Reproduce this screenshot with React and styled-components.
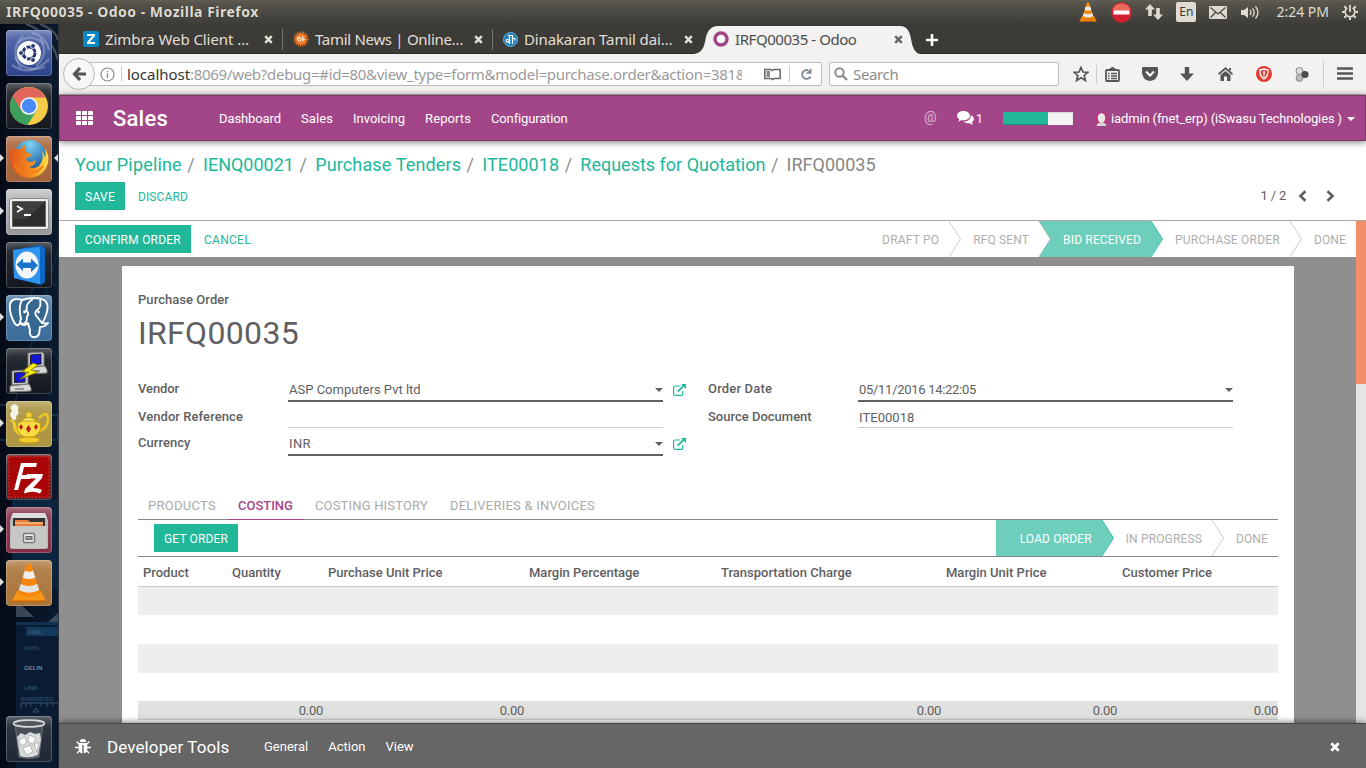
import React from 'react';
import styled, { createGlobalStyle, css } from 'styled-components';

const GlobalStyle = createGlobalStyle`
  * { box-sizing: border-box; }
  body { margin: 0; overflow: hidden; background: #fff; }
  svg { display: block; flex: none; }
`;

const system = '"Noto Sans", "Open Sans", sans-serif';
const roboto = 'Roboto, "Liberation Sans", sans-serif';
const teal = '#21b799';
const tealSoft = '#6dcfbb';
const purple = '#a24689';
const ink = '#606062';

const Text = styled.span`
  letter-spacing: ${(p) => p.$ls || 0}px;
  white-space: nowrap;
  flex: none;
`;

/* ---------- desktop shell ---------- */
const Desktop = styled.div`
  width: 1366px;
  height: 768px;
  display: flex;
  flex-direction: column;
  overflow: hidden;
  font-family: ${roboto};
`;
const TopPanel = styled.header`
  height: 24px;
  display: flex;
  align-items: center;
  padding: 0 8px 0 6px;
  background: linear-gradient(#615e53 0, #56544c 3px, #3d3c38 100%);
  color: #dfdbd2;
  font-family: ${system};
  flex: none;
`;
const WindowTitle = styled(Text)`
  font: bold 14px/24px ${system};
  flex: 1;
  text-shadow: 0 0 1px #222;
`;
const Tray = styled.div`
  display: flex;
  align-items: center;
  height: 24px;
`;
const TrayItem = styled.div`
  margin-left: ${(p) => p.$gap}px;
`;
const Lang = styled.div`
  width: 20px;
  height: 20px;
  border-radius: 2px;
  background: #dfdbd2;
  color: #3c3b37;
  font: 12px/20px ${system};
  text-align: center;
`;
const Clock = styled(Text)`
  font: 14px/24px ${system};
`;
const Below = styled.div`
  display: flex;
  flex: 1;
  min-height: 0;
`;

/* ---------- launcher ---------- */
const Launcher = styled.nav`
  width: 59px;
  flex: none;
  position: relative;
  background: #060d1a;
  border-right: 1px solid #2b3038;
  padding: 6px 0 6px 6px;
  display: flex;
  flex-direction: column;
`;
const Wallpaper = styled.svg`
  position: absolute;
  left: 0;
  top: 0;
`;
const Tile = styled.div`
  position: relative;
  width: 46px;
  height: 46px;
  margin-bottom: 7px;
  border-radius: 4px;
  background: ${(p) => p.$bg};
  box-shadow: inset 0 0 0 1px rgba(255, 255, 255, 0.2), inset 0 8px 10px -6px rgba(255, 255, 255, 0.35);
  flex: none;
  ${(p) => p.$last && css`margin: auto 0 0;`}
`;
const Pip = styled.span`
  position: absolute;
  top: 18px;
  border: 4.5px solid transparent;
  ${(p) => (p.$right
    ? css`right: -6px; border-right-color: #ddd; border-left: 0;`
    : css`left: -6px; border-left-color: #ddd; border-right: 0;`)}
`;

/* ---------- browser chrome ---------- */
const Browser = styled.div`
  flex: 1;
  min-width: 0;
  display: flex;
  flex-direction: column;
`;
const TabStrip = styled.div`
  height: 30px;
  flex: none;
  display: flex;
  background: #3c3b37;
  border-bottom: 1px solid #2c2b28;
  padding-left: 14px;
`;
const Tab = styled.div`
  position: relative;
  width: ${(p) => (p.$active ? 217 : 210)}px;
  height: 30px;
  display: flex;
  align-items: center;
  padding: 0 ${(p) => (p.$active ? 17 : 10)}px 0 10px;
  color: ${(p) => (p.$active ? '#4c4c4c' : '#e3dfd6')};
  font: 15px/32px ${system};
  ${(p) => p.$divider && css`
    background: linear-gradient(#77756f, #77756f) right 5px / 1px 21px no-repeat;
  `}
`;
const TabShape = styled.svg`
  position: absolute;
  left: -9px;
  top: 2px;
`;
const TabLabel = styled(Text)`
  position: relative;
  flex: 1;
  margin-left: 6px;
`;
const TabIcon = styled.div`
  position: relative;
`;
const NewTab = styled.div`
  display: flex;
  align-items: center;
  margin-left: 5px;
  padding-top: 2px;
`;
const Toolbar = styled.div`
  height: 41px;
  flex: none;
  display: flex;
  align-items: center;
  background: #f3f2f1;
  border-bottom: 1px solid #bbb8b2;
  padding-left: 4px;
  font: 15px/22px ${system};
`;
const Back = styled.div`
  width: 32px;
  height: 32px;
  border-radius: 50%;
  border: 1px solid #b9b6b0;
  background: #f8f7f6;
  display: grid;
  place-items: center;
  position: relative;
  z-index: 1;
`;
const Field = styled.div`
  height: 24px;
  display: flex;
  align-items: center;
  border: 1px solid #bebbb5;
  border-radius: 2px;
  background: #fff;
`;
const UrlField = styled(Field)`
  width: 734px;
  margin-left: -7px;
  padding-left: 11px;
`;
const UrlText = styled.div`
  width: 615px;
  overflow: hidden;
  white-space: nowrap;
  color: #9b9b9b;
  margin-left: 5px;
`;
const UrlHost = styled(Text)`
  color: #333;
`;
const SearchField = styled(Field)`
  width: 230px;
  margin-left: 7px;
  padding-left: 4px;
  color: #8c8c8c;
  gap: 5px;
`;
const Rule = styled.i`
  width: 1px;
  height: ${(p) => p.$h || 16}px;
  background: #ccc;
  margin-left: ${(p) => p.$gap || 0}px;
  flex: none;
`;
const MenuRule = styled(Rule)`
  background: linear-gradient(transparent, #ccc 25%, #ccc 75%, transparent);
`;
const Tool = styled.div`
  margin-left: ${(p) => p.$gap}px;
`;

/* ---------- application ---------- */
const NavBar = styled.nav`
  position: relative;
  z-index: 2;
  height: 46px;
  flex: none;
  display: flex;
  align-items: center;
  padding: 0 10px 0 16px;
  background: ${purple};
  border: 1px solid #7a3768;
  box-shadow: 0 1px 7px rgba(0, 0, 0, 0.55);
  color: #fff;
  font: 13px/44px ${roboto};
`;
const AppTitle = styled(Text)`
  font: 500 22px/44px ${roboto};
  width: 106px;
  margin: 2px 0 0 20px;
`;
const Menu = styled.div`
  display: flex;
  gap: 20px;
  flex: 1;
  padding-top: ${(p) => p.$drop || 0}px;
`;
const Mention = styled.span`
  font: 14px/40px ${roboto};
  opacity: 0.6;
  margin-top: -2px;
`;
const Chats = styled.div`
  display: flex;
  align-items: center;
  gap: 2px;
  margin-left: 20px;
`;
const ChatCount = styled.span`
  padding-top: 2px;
`;
const Meter = styled.div`
  width: 70px;
  height: 13px;
  margin-left: 20px;
  background: #f4f4f4;
  box-shadow: inset 0 1px 2px rgba(0, 0, 0, 0.15);
`;
const MeterFill = styled.div`
  width: 45px;
  height: 13px;
  background: ${teal};
  box-shadow: inset 0 -1px 0 #1a917a;
`;
const User = styled.div`
  display: flex;
  align-items: center;
  margin-left: 22px;
  padding-top: 2px;
`;
const UserName = styled(Text)`
  margin: 0 5px 0 3px;
`;
const Caret = styled.i`
  border: 4px solid transparent;
  border-top-color: ${(p) => p.$color || 'currentColor'};
  border-bottom: 0;
  flex: none;
`;
const ControlPanel = styled.section`
  height: 80px;
  flex: none;
  display: flex;
  flex-direction: column;
  padding: 12px 31px 0 16px;
  background: #fff;
  border-bottom: 1px solid #a8a8a8;
`;
const Crumbs = styled.div`
  display: flex;
  font: 18px/24px ${roboto};
  color: ${teal};
`;
const Slash = styled.span`
  width: 21.2px;
  padding-left: 5.5px;
  color: #8f8f8f;
`;
const Current = styled(Text)`
  color: #878787;
`;
const Actions = styled.div`
  display: flex;
  align-items: center;
  margin-top: 5px;
`;
const Button = styled.button`
  height: 28px;
  border: 0;
  padding: 2px 10px 0;
  margin-right: 3px;
  background: ${(p) => (p.$primary ? teal : 'transparent')};
  color: ${(p) => (p.$primary ? '#fff' : teal)};
  font: 12px/26px ${roboto};
`;
const Pager = styled.div`
  margin-left: auto;
  display: flex;
  align-items: center;
  color: ${ink};
  font: 13px/26px ${roboto};
`;
const Workspace = styled.div`
  flex: 1;
  min-height: 0;
  display: flex;
  overflow: hidden;
`;
const Page = styled.main`
  flex: 1;
  display: flex;
  flex-direction: column;
  background: #8f8f8f;
`;
const ScrollTrack = styled.div`
  width: 10px;
  background: #e5e5e5;
`;
const ScrollThumb = styled.div`
  height: 163px;
  background: #f08f68;
`;
const StatusBar = styled.div`
  height: ${(p) => (p.$inner ? 37 : 36)}px;
  flex: none;
  display: flex;
  align-items: center;
  padding-left: 16px;
  background: #fff;
  ${(p) => p.$inner && css`border-bottom: 1px solid #888;`}
`;
const Steps = styled.div`
  margin-left: auto;
  display: flex;
  height: 36px;
  color: #aeaeae;
  font: 12px/38px ${roboto};
`;
const Step = styled.div`
  height: 36px;
  padding: 0 10px 0 ${(p) => (p.$first ? 24 : 12)}px;
  background: ${(p) => (p.$active ? tealSoft : 'transparent')};
  color: ${(p) => (p.$active ? '#fff' : 'inherit')};
`;
const Sheet = styled.section`
  width: 1172px;
  flex: 1;
  margin: 9px 0 0 63px;
  padding: 25px 16px 0;
  background: #fff;
  color: ${ink};
  overflow: hidden;
`;
const Kind = styled.div`
  font: 500 13px/18px ${roboto};
  letter-spacing: 0.05px;
`;
const Heading = styled.h1`
  margin: 4px 0 0;
  font: 400 32px/40px ${roboto};
  height: 63px;
`;
const Groups = styled.div`
  display: flex;
  gap: 22px;
  height: 111px;
`;
const Group = styled.div`
  width: 548px;
  display: flex;
  flex-direction: column;
  gap: 2px;
`;
const FormRow = styled.div`
  display: flex;
  height: ${(p) => (p.$strong ? 26 : 24)}px;
`;
const Label = styled.label`
  width: 150px;
  font: 500 13px/26px ${roboto};
`;
const Value = styled.div`
  width: 375px;
  display: flex;
  align-items: center;
  justify-content: space-between;
  padding: ${(p) => (p.$strong ? '3px' : '4px')} 0 0 1px;
  border-bottom: ${(p) => (p.$strong ? `2px solid ${ink}` : '1px solid #ccc')};
  font: 13px/19px ${roboto};
`;
const LinkIcon = styled.div`
  margin: 8px 0 0 10px;
`;
const Tabs = styled.div`
  display: flex;
  gap: 2px;
  height: 33px;
  border-bottom: 1px solid #888;
`;
const NoteTab = styled.div`
  height: 33px;
  padding: 0 10px;
  font: ${(p) => (p.$active ? 500 : 400)} 13px/37px ${roboto};
  color: ${(p) => (p.$active ? purple : '#aaa')};
  border-bottom: 1px solid ${(p) => (p.$active ? purple : 'transparent')};
`;
const gridCols = css`
  display: grid;
  grid-template-columns: 89px 96px 201px 192px 225px 176px 161px;
`;
const HeadRow = styled.div`
  ${gridCols}
  height: 30px;
  border-bottom: 1px solid #ccc;
  font: 500 13px/31px ${roboto};
`;
const HeadCell = styled.div`
  padding-left: 5px;
`;
const BlankRow = styled.div`
  height: ${(p) => p.$h}px;
  background: ${(p) => (p.$shade ? '#edefee' : '#fff')};
`;
const TotalRow = styled.div`
  ${gridCols}
  height: 19px;
  background: #e1e1df;
  border-bottom: 1px solid #d0d0ce;
  font: 13px/19px ${roboto};
  text-align: right;
`;
const DevBar = styled.footer`
  position: relative;
  z-index: 2;
  height: 45px;
  flex: none;
  display: flex;
  align-items: center;
  padding: 1px 26px 0 16px;
  background: #666;
  border-top: 1px solid #484848;
  box-shadow: 0 -1px 6px rgba(0, 0, 0, 0.5);
  color: #fff;
  font: 13px/43px ${roboto};
`;
const DevTitle = styled(Text)`
  width: 157px;
  margin: 0 0 0 16px;
  font: 17px/42px ${roboto};
`;

/* ---------- drawings ---------- */
const Cross = ({ size = 9, color = '#e3dfd6' }) => (
  <svg width={size} height={size} viewBox="0 0 9 9">
    <path d="M1.2 1.2l6.6 6.6M7.8 1.2L1.2 7.8" stroke={color} strokeWidth="2.5" />
  </svg>
);

const Arrow = ({ kind }) => (
  <svg width="12" height="36" viewBox="0 0 12 36">
    {kind === 'in' && <path d="M0 0H12V36H0L11.5 18Z" fill={tealSoft} />}
    {kind === 'out' && <path d="M0 0L11.5 18L0 36Z" fill={tealSoft} />}
    <path d="M0 0L11.5 18L0 36" fill="none" strokeWidth="1" stroke={kind === 'out' ? '#3dbfa5' : kind === 'in' ? '#8fbdb3' : '#ccc'} />
  </svg>
);

const Chevron = ({ right }) => (
  <svg width="9" height="12" viewBox="0 0 9 12">
    <path d={right ? 'M1.5 1.2L6.6 6L1.5 10.8' : 'M7.5 1.2L2.4 6L7.5 10.8'} fill="none" stroke={ink} strokeWidth="2.6" />
  </svg>
);

const External = () => (
  <svg width="13" height="12" viewBox="0 0 13 12" fill="none" stroke={teal}>
    <path d="M7.5 2H2.2Q.6 2 .6 3.6V9.9Q.6 11.4 2.2 11.4H8.2Q9.8 11.4 9.8 9.9V7" strokeWidth="1.2" />
    <path d="M4.7 7.6L11 1.6" strokeWidth="1.8" />
    <path d="M8 0H13V5Z" fill={teal} stroke="none" />
  </svg>
);

const Cone = ({ size }) => (
  <svg width={size} height={size} viewBox="0 0 36 40">
    <path d="M6 28H30L35 38Q35 39 34 39H2Q1 39 1 38Z" fill="#f48809" />
    <path d="M1 37.5H35V39H1Z" fill="#ca6503" />
    <path d="M15.5 2Q18 0 20.5 2L29 30Q18 37 7 30Z" fill="#f68a0b" />
    <path d="M13.7 8.5Q18 11 22.3 8.5L24.5 15.5Q18 19 11.5 15.5Z" fill="#eee" />
    <path d="M9.6 22Q18 26.5 26.4 22L28.5 28Q18 34 7.5 28Z" fill="#e8e8e8" />
    <path d="M9 32.5Q18 37 28 32.5" stroke="#d66d00" strokeWidth="1.4" fill="none" />
  </svg>
);

const UbuntuArt = () => (
  <svg width="46" height="46" viewBox="0 0 46 46">
    <g fill="none" stroke="#b9c4df" strokeOpacity=".4" strokeWidth="2.2">
      <path d="M17 6Q3 20 15 38" /><path d="M12 13Q24 2 38 14" /><path d="M34 8Q44 24 30 36" />
      <path d="M9 27Q18 44 39 37" /><path d="M6 35Q25 48 43 29" /><path d="M26 3Q40 6 43 20" />
    </g>
    <circle cx="23" cy="23" r="12" fill="#fff" />
    <circle cx="23" cy="23" r="6" fill="none" stroke="#26346f" strokeWidth="3" strokeDasharray="11.2 1.37" />
    <g fill="#26346f" stroke="#fff" strokeWidth=".9"><circle cx="15" cy="23" r="2.4" /><circle cx="27" cy="16" r="2.4" /><circle cx="27" cy="30" r="2.4" /></g>
  </svg>
);

const ChromeArt = () => (
  <svg width="46" height="46" viewBox="0 0 46 46">
    <circle cx="23" cy="23" r="19" fill="#f6cb45" />
    <path d="M23 23L6.5 13.5A19 19 0 0 0 21.500 42L31 27Z" fill="#3d9f5c" />
    <path d="M6.500 13.500A19 19 0 0 1 39.800 14.500H23L15 27Z" fill="#e2665c" />
    <circle cx="23" cy="23" r="8.800" fill="#f5f5f5" />
    <circle cx="23" cy="23" r="7.200" fill="#4a8af4" />
  </svg>
);

const FirefoxArt = () => (
  <svg width="46" height="46" viewBox="0 0 46 46">
    <defs>
      <radialGradient id="globe" cx=".5" cy=".15" r=".8"><stop offset="0" stopColor="#7fd4f3" /><stop offset="1" stopColor="#12559b" /></radialGradient>
      <linearGradient id="fox" x1="0" x2="1"><stop offset="0" stopColor="#e2541b" /><stop offset=".6" stopColor="#f5901e" /><stop offset="1" stopColor="#ffe24a" /></linearGradient>
    </defs>
    <circle cx="24" cy="20" r="16" fill="url(#globe)" />
    <path d="M5 11Q7 12 9 14Q12 12 15 13Q17 9 20 9Q18 13 20 16Q23 18 26 18Q25 21 20 22Q20 25 24 26Q28 26 30 24Q29 30 23 31Q31 34 35 27Q38 21 36 15Q39 18 39 22Q41 16 38 11Q44 19 42 27Q38 41 23 42Q9 41 5 28Q3 21 5 11Z" fill="url(#fox)" />
    <path d="M8 28Q13 38 24 37Q33 36 37 30" stroke="#ef7d1a" strokeWidth="2" fill="none" />
  </svg>
);

const TerminalArt = () => (
  <svg width="46" height="46" viewBox="0 0 46 46">
    <rect x="3.500" y="9.500" width="39" height="31" rx="2" fill="#eee" stroke="#888" />
    <rect x="6.500" y="12.500" width="33" height="25" fill="#2b2d2b" stroke="#666" />
    <path d="M6.500 12.500H39.500L20 30H6.500Z" fill="#484b48" opacity=".6" />
    <path d="M11 17L16 20L11 23M18 26H25" stroke="#fff" strokeWidth="1.800" fill="none" />
  </svg>
);

const TeamViewerArt = () => (
  <svg width="46" height="46" viewBox="0 0 46 46">
    <path d="M7 8L35 3L39 6V40L35 43L8 36Z" fill="#0d67c8" />
    <path d="M7 8L34 5V42L8 36Z" fill="#2f95ef" />
    <ellipse cx="21" cy="23" rx="11.500" ry="13.500" fill="#f4f6f8" />
    <path d="M10.500 22.500L17 16.500V20.500H25V16.500L32 23.500L25 30V26H17V29Z" fill="#1c74cf" />
  </svg>
);

const PostgresArt = () => (
  <svg width="46" height="46" viewBox="0 0 46 46" fill="#35678f" stroke="#fff" strokeWidth="1.900" strokeLinejoin="round">
    <path d="M16 5Q29 1 38 5Q44 9 40 20Q38 26 36 28Q41 29 42 28Q39 32 34 32L33 39Q31 43 27 42Q23 41 24 35L22 28Q18 32 14 28Q11 33 8 27Q3 18 4 9Q6 2 16 5Z" />
    <path d="M16 5Q12 12 15 24Q13 27 16 29Q21 29 21 22Q24 17 19 15M31 15Q27 18 32 23L36 28M31 15Q36 12 34 5M21 15Q19 9 27 4" fill="none" />
    <g fill="#fff" stroke="none"><circle cx="18.500" cy="17" r="1.400" /><circle cx="32.500" cy="17" r="1.400" /></g>
  </svg>
);

const PuttyArt = () => (
  <svg width="46" height="46" viewBox="0 0 46 46">
    {[[22, 4], [6, 22]].map(([x, y]) => (
      <g key={x} transform={`translate(${x} ${y})`}>
        <path d="M0 1L14 0L16 2V14L0 15Z" fill="#c8c8c4" stroke="#777" />
        <path d="M2.500 3L13 2V12L2.500 12.500Z" fill="#1515d6" stroke="#223" />
        <path d="M-2 16L17 14L19 18V21L-2 22Z" fill="#d8d8d4" stroke="#777" />
        <path d="M3 19H12" stroke="#555" />
      </g>
    ))}
    <path d="M27 15L16 24H23L14 31L32 24L25 22L32 17Z" fill="#f8ee13" stroke="#7e7400" strokeWidth=".8" />
  </svg>
);

const TeapotArt = () => (
  <svg width="46" height="46" viewBox="0 0 46 46">
    <path d="M7 19Q2 13 6 10Q2 5 8 3Q14 4 12 9Q14 13 10 15Q12 19 7 19Z" fill="#f5f3e9" />
    <path d="M33 17Q42 8 42 19Q41 29 32 30" fill="none" stroke="#e9c928" strokeWidth="2.500" />
    <path d="M4 19Q8 18 10 23Q10 27 15 32L17 35Q7 33 7 25Q7 21 4 20Z" fill="#efcc28" />
    <path d="M12 22Q22 16 34 22Q37 30 28 36H18Q9 30 12 22Z" fill="#f7dc43" stroke="#c69b12" />
    <path d="M15 20Q22 13 31 20Z" fill="#fbec7b" stroke="#c69b12" /><circle cx="23" cy="14" r="3.200" fill="#f4d33a" stroke="#c69b12" />
    <ellipse cx="23" cy="39" rx="11" ry="3" fill="#f1ce2d" stroke="#c69b12" />
    <path d="M15 23L17 26L15 29L13 26ZM22.500 24L25 28L22.500 32L20 28ZM30 23L32 26L30 29L28 26Z" fill="#c01c1c" />
  </svg>
);

const FileZillaArt = () => (
  <svg width="46" height="46" viewBox="0 0 46 46">
    <rect x="2.500" y="2.500" width="41" height="41" fill="#a90707" stroke="#c92323" strokeWidth="2" strokeDasharray="2 1.500" />
    <path d="M15 9H31L30 13H18L16 21H25L24 25H15L12 36H8Z" fill="#fff" />
    <path d="M21 20H37L36 24L27 34Q33 34 36 36L34 39.500Q27 36 18 39.500L19 35L30 24.500H20Z" fill="#fff" />
  </svg>
);

const FilesArt = () => (
  <svg width="46" height="46" viewBox="0 0 46 46">
    <path d="M7 6H39L42 13V40Q42 42 40 42H6Q4 42 4 40V13Z" fill="#b9b9b7" />
    <path d="M7 6H39L41 11H5Z" fill="#ddd" />
    <rect x="7" y="11" width="32" height="9" fill="#333" />
    <path d="M9 13H22L24 15H37V20H9Z" fill="#eb7b31" /><path d="M9 16H37" stroke="#f7dcc2" />
    <path d="M5 19H41V41H5Z" fill="#c7c7c5" />
    <rect x="17.500" y="26.500" width="11" height="9" rx="1" fill="#eee" stroke="#777" strokeWidth="1.500" />
    <rect x="20" y="29.500" width="6" height="3" fill="#999" stroke="#666" />
  </svg>
);

const VlcArt = () => (
  <svg width="46" height="46" viewBox="-5 -3 46 46">
    <path d="M6 28H30L35 38Q35 39 34 39H2Q1 39 1 38Z" fill="#f79517" />
    <path d="M1 37.500H35V39H1Z" fill="#ca6503" />
    <path d="M15.500 2Q18 0 20.500 2L29 30Q18 37 7 30Z" fill="#f7860a" />
    <path d="M13.900 7.500Q18 10 22.100 7.500L24.300 14.500Q18 17.500 11.700 14.500Z" fill="#eee" />
    <path d="M9.800 21Q18 25 26.200 21L28.200 27Q18 32.500 7.800 27Z" fill="#e4e4e4" />
  </svg>
);

const TrashArt = () => (
  <svg width="46" height="46" viewBox="0 0 46 46">
    <path d="M9 8H37L33 41Q23 44 13 41Z" fill="#5b6268" fillOpacity=".6" stroke="#7d8489" strokeWidth=".7" />
    <path d="M11 21L15 17L19 19L24 16L29 18L34 17L35 24L32 39Q23 43 14 40Z" fill="#d9dada" />
    <path d="M13 24L19 21L21 27L15 30ZM23 19L30 22L27 28L22 26ZM17 32L24 29L27 36L20 39ZM28 29L33 26L31 36Z" fill="#fafafa" stroke="#a2a4a5" strokeWidth=".7" />
    <ellipse cx="23" cy="7.500" rx="15.500" ry="3.400" fill="#50565b" stroke="#d5d8da" strokeWidth="1.600" />
  </svg>
);

const LauncherScene = () => (
  <Wallpaper width="58" height="744" viewBox="0 24 58 744">
    <defs><linearGradient id="sky" x1="0" x2="1"><stop offset="0" stopColor="#050a17" /><stop offset="1" stopColor="#0a1a2e" /></linearGradient></defs>
    <rect y="24" width="58" height="744" fill="url(#sky)" />
    <path d="M26 24Q50 32 58 60M40 24Q56 30 58 40" stroke="#4a4f5c" strokeWidth="2" fill="none" />
    <path d="M30 240L58 290M44 240L30 300L58 360M58 250L10 420" stroke="#14304a" fill="none" />
    <path d="M52 415H58V440H52M0 405H6M0 440H12" stroke="#1d4d6c" fill="none" />
    <rect x="12" y="500" width="46" height="88" fill="#0b2440" />
    <path d="M16 600V617H34ZM48 622L58 613V622Z" fill="#8296a8" opacity=".4" />
    <rect x="16" y="622" width="42" height="146" fill="#0a1c32" />
    <rect x="16" y="622" width="42" height="3" fill="#10304f" />
    <rect x="26" y="627" width="32" height="9" fill="#12395b" />
    <g fill="#416482" fontFamily="Liberation Sans" fontWeight="bold" fontSize="6">
      <text x="29" y="634">LOC</text><text x="24" y="650" opacity=".5">EMIS</text><text x="24" y="670" fill="#7088a0">GELIN</text><text x="24" y="690" opacity=".7">LINK</text><text x="21" y="701" opacity=".6" fontSize="5">BAROMETER</text>
    </g>
    <path d="M21 708V703H58M26 703V707M31 703V706M41 703V706M47 703V707M53 703V706M33 712L36 708L39 712Z" stroke="#34536e" fill="none" />
  </Wallpaper>
);

const launcherItems = [
  { bg: 'linear-gradient(#5a6fae,#2d448c)', Art: UbuntuArt },
  { bg: 'linear-gradient(#33363c,#15181f)', Art: ChromeArt },
  { bg: 'linear-gradient(#b3754c,#a2623a)', Art: FirefoxArt, left: true, right: true },
  { bg: 'linear-gradient(#c3c3c6,#98989b)', Art: TerminalArt, left: true },
  { bg: 'linear-gradient(#2c3138,#14181e)', Art: TeamViewerArt },
  { bg: 'linear-gradient(#527ea8,#3b6c9a)', Art: PostgresArt, left: true },
  { bg: 'linear-gradient(#2c3037,#12161d)', Art: PuttyArt },
  { bg: 'linear-gradient(#b39e54,#ad9440)', Art: TeapotArt, left: true },
  { bg: 'linear-gradient(#4d3337,#20252c)', Art: FileZillaArt },
  { bg: 'linear-gradient(#92455a,#862e42)', Art: FilesArt, left: true },
  { bg: 'linear-gradient(#b48551,#a87337)', Art: VlcArt, left: true },
];

const NoEntry = () => (
  <svg width="21" height="21" viewBox="0 0 21 21"><circle cx="10.500" cy="10.500" r="10.300" fill="#d02030" /><path d="M1.500 8A9.500 9.500 0 0 1 19.500 8Q10 11 1.500 8Z" fill="#ea6a5e" /><rect x="2.500" y="8.500" width="16" height="4" fill="#fff" /></svg>
);
const Transfer = () => (
  <svg width="18" height="16" viewBox="0 0 18 16" fill="#dfdbd2"><path d="M5 0L10 5.500H6.800V12H3.200V5.500H0Z" /><path d="M13 16L8 10.500H11.200V4H14.800V10.500H18Z" /></svg>
);
const Mail = () => (
  <svg width="18" height="13" viewBox="0 0 18 13"><rect width="18" height="13" rx="1" fill="#dfdbd2" /><path d="M1.500 1.500L9 8L16.500 1.500M1.500 11.500L6.500 6.500M16.500 11.500L11.500 6.500" fill="none" stroke="#46443f" strokeWidth="1.200" /></svg>
);
const Sound = () => (
  <svg width="20" height="15" viewBox="0 0 20 15" fill="none" stroke="#dfdbd2" strokeWidth="1.300"><path d="M0 5H3L7 2V13L3 10H0Z" fill="#dfdbd2" stroke="none" /><path d="M9 5Q11 7.500 9 10M11.500 3.300Q15 7.500 11.500 11.700M14.500 1.500Q19.500 7.500 14.500 13.500" /></svg>
);
const Power = () => (
  <svg width="16" height="16" viewBox="0 0 16 16" fill="none" stroke="#dfdbd2"><path d="M5.300 3.800A4.900 4.900 0 1 0 10.700 3.800" strokeWidth="1.700" /><path d="M8 1V8" strokeWidth="1.800" /><path d="M2.300 2.300L4 4M13.700 2.300L12 4M0 8H2.500M13.500 8H16M2.300 13.700L4 12M13.700 13.700L12 12M8 13.500V16" strokeWidth="2" /></svg>
);
const ZimbraIcon = () => (
  <svg width="16" height="16" viewBox="0 0 16 16"><rect width="16" height="16" rx="2" fill="#0a87c7" /><path d="M4 3H12V5L6.800 11H12V13H4V11L9.200 5H4Z" fill="#fff" /></svg>
);
const TamilIcon = () => (
  <svg width="16" height="16" viewBox="0 0 16 16" fill="none"><circle cx="8" cy="8" r="6.800" stroke="#dd6a20" strokeWidth="1.800" strokeDasharray="1.200 .9" /><circle cx="8" cy="8" r="6" fill="#f27b28" /><path d="M7 6Q4.500 5.500 4.500 8Q5 10.500 7.500 9.500Q9.500 8 7.500 7L5.500 8M9.800 5V10.500M9.800 8.500H12" stroke="#fff" /></svg>
);
const DinakaranIcon = () => (
  <svg width="15" height="15" viewBox="0 0 15 15" fill="none"><circle cx="7.500" cy="7.500" r="7" fill="#2180bd" stroke="#66acd6" /><path d="M5 3.500H10M6.500 3.500V8Q3 6.500 3.300 9.300Q4.500 11 6.500 9V12M9.500 3.500V12M9.500 6.500Q12.500 5.500 11.800 8.500" stroke="#fff" strokeWidth="1.200" /></svg>
);
const OdooIcon = () => (
  <svg width="16" height="16" viewBox="0 0 16 16"><circle cx="8" cy="8" r="6" fill="#fff" stroke="#a24689" strokeWidth="3.400" /></svg>
);

const browserTabs = [
  { label: 'Zimbra Web Client …', ls: -0.07, Icon: ZimbraIcon, divider: true },
  { label: 'Tamil News | Online…', ls: -0.3, Icon: TamilIcon, divider: true },
  { label: 'Dinakaran Tamil dai…', ls: -0.13, Icon: DinakaranIcon },
];

const gray = '#565656';

function BrowserChrome() {
  return (
    <>
      <TabStrip>
        {browserTabs.map(({ label, ls, Icon, divider }) => (
          <Tab key={label} $divider={divider}>
            <TabIcon><Icon /></TabIcon>
            <TabLabel $ls={ls}>{label}</TabLabel>
            <Cross />
          </Tab>
        ))}
        <Tab $active>
          <TabShape width="226" height="28" viewBox="0 0 226 28">
            <path d="M0 28Q9 27 11 16Q13 0 24 0H206Q215 0 217 13Q219 27 226 28Z" fill="#f3f2f1" />
          </TabShape>
          <TabIcon><OdooIcon /></TabIcon>
          <TabLabel $ls={-0.44}>IRFQ00035 - Odoo</TabLabel>
          <TabIcon><Cross color="#666" /></TabIcon>
        </Tab>
        <NewTab>
          <svg width="14" height="14" viewBox="0 0 14 14"><path d="M7 1V13M1 7H13" stroke="#fff" strokeWidth="2.600" /></svg>
        </NewTab>
      </TabStrip>
      <Toolbar>
        <Back>
          <svg width="15" height="16" viewBox="0 0 15 16"><path d="M8 2L2.500 8L8 14M2.500 8H14" fill="none" stroke={gray} strokeWidth="3.200" /></svg>
        </Back>
        <UrlField>
          <svg width="15" height="15" viewBox="0 0 15 15" fill="none" stroke="#8c8c8c"><circle cx="7.500" cy="7.500" r="6.500" strokeWidth="1.200" /><path d="M7.500 6.500V11M7.500 3.800V5.200" strokeWidth="1.400" /></svg>
          <Rule $gap={6} />
          <UrlText>
            <UrlHost $ls={-0.04}>localhost</UrlHost>
            <Text $ls={-0.29}>:8069/web?debug=#id=80&amp;view_type=form&amp;model=purchase.order&amp;action=381&amp;</Text>
          </UrlText>
          <Tool $gap={22}>
            <svg width="17" height="13" viewBox="0 0 17 13" fill="none" stroke="#666" strokeWidth="1.500"><path d="M8.500 2.500L10 1.500H16.200V10.500H10L8.500 11.500L7 10.500H.8V1.500H7ZM2.500 4H6M2.500 6H6M2.500 8H6" /></svg>
          </Tool>
          <Rule $gap={8} />
          <Tool $gap={10}>
            <svg width="12" height="13" viewBox="0 0 12 13"><path d="M8.500 2.500A4.400 4.400 0 1 0 10.500 8.500" fill="none" stroke="#7f8b99" strokeWidth="1.900" /><path d="M11.500 0V5.800H5.800Z" fill="#7f8b99" /></svg>
          </Tool>
        </UrlField>
        <SearchField>
          <svg width="14" height="14" viewBox="0 0 14 14" fill="none" stroke="#8c8c8c"><circle cx="5.500" cy="5.500" r="4.200" strokeWidth="2" /><path d="M8.500 8.500L13 13" strokeWidth="2.400" /></svg>
          <Text $ls={-0.35}>Search</Text>
        </SearchField>
        <Tool $gap={14}>
          <svg width="16" height="16" viewBox="0 0 16 16"><path d="M8 1.500L10 6L15 6.300L11.200 9.500L12.400 14.500L8 11.800L3.600 14.500L4.800 9.500L1 6.300L6 6Z" fill="none" stroke={gray} strokeWidth="1.700" /></svg>
        </Tool>
        <Rule $gap={7} $h={18} />
        <Tool $gap={8}>
          <svg width="15" height="15" viewBox="0 0 15 15" fill="none" stroke={gray}><rect x="1" y="3" width="13" height="11" rx="1" strokeWidth="1.800" /><path d="M5 2.500L7.500 .8L10 2.500" strokeWidth="2" /><path d="M3 6.500H4.500M6 6.500H12M3 9H4.500M6 9H12M3 11.500H4.500M6 11.500H12" strokeWidth="1.400" /></svg>
        </Tool>
        <Tool $gap={22}>
          <svg width="16" height="14" viewBox="0 0 16 14"><path d="M1 0H15Q16 0 16 1V6Q15 13.500 8 14Q1 13.500 0 6V1Q0 0 1 0Z" fill={gray} /><path d="M4 4.500L8 8.500L12 4.500" fill="none" stroke="#fff" strokeWidth="2" /></svg>
        </Tool>
        <Tool $gap={22}>
          <svg width="14" height="14" viewBox="0 0 14 14"><path d="M4.800 0H9.200V6.500H14L7 14L0 6.500H4.800Z" fill={gray} /></svg>
        </Tool>
        <Tool $gap={24}>
          <svg width="15" height="14" viewBox="0 0 15 14" fill={gray}><path d="M7.500 0L15 6.500L14 8L7.500 2.600L1 8L0 6.500ZM2.500 8L7.500 4L12.500 8V14H9V9.500H6V14H2.500ZM11 1H13V4L11 2.500Z" /></svg>
        </Tool>
        <Tool $gap={23}>
          <svg width="16" height="16" viewBox="0 0 16 16"><circle cx="8" cy="8" r="8" fill="#e23b32" /><path d="M4 4L8 3L12 4Q12.500 10 8 13Q3.500 10 4 4Z" fill="none" stroke="#fff" strokeWidth="1.300" /><path d="M8 5V9M8 9.800V11" stroke="#fff" strokeWidth="1.600" /></svg>
        </Tool>
        <Tool $gap={23}>
          <svg width="14" height="15" viewBox="0 0 14 15"><circle cx="4.500" cy="4" r="3.500" fill="#ddd" stroke="#888" /><circle cx="4.500" cy="11" r="3.500" fill="#bbb" stroke="#888" /><circle cx="10" cy="7.500" r="3.600" fill="#4c4c4c" /></svg>
        </Tool>
        <MenuRule $gap={14} $h={36} />
        <Tool $gap={13}>
          <svg width="16" height="14" viewBox="0 0 16 14"><path d="M1 1.500H15M1 6.500H15M1 11.500H15" stroke={gray} strokeWidth="2.700" strokeLinecap="round" /></svg>
        </Tool>
      </Toolbar>
    </>
  );
}

const menus = [['Dashboard', -0.1], ['Sales', 0.09], ['Invoicing', 0.01], ['Reports', 0.1], ['Configuration', -0.15]];
const crumbs = [['Your Pipeline', 0.17], ['IENQ00021', 0], ['Purchase Tenders', 0.14], ['ITE00018', 0.08], ['Requests for Quotation', 0]];
const columns = ['Product', 'Quantity', 'Purchase Unit Price', 'Margin Percentage', 'Transportation Charge', 'Margin Unit Price', 'Customer Price'];
const totals = ['', '0.00', '0.00', '', '0.00', '0.00', '0.00'];

function FieldRow({ label, lls, value, ls, select, link }) {
  return (
    <FormRow $strong={select}>
      <Label><Text $ls={lls}>{label}</Text></Label>
      <Value $strong={select}>
        <Text $ls={ls}>{value}</Text>
        {select && <Caret />}
      </Value>
      {link && <LinkIcon><External /></LinkIcon>}
    </FormRow>
  );
}

export default function App() {
  return (
    <Desktop>
      <GlobalStyle />
      <TopPanel>
        <WindowTitle $ls={0.5}>IRFQ00035 - Odoo - Mozilla Firefox</WindowTitle>
        <Tray>
          <TrayItem><Cone size={20} /></TrayItem>
          <TrayItem $gap={13}><NoEntry /></TrayItem>
          <TrayItem $gap={13}><Transfer /></TrayItem>
          <TrayItem $gap={13}><Lang>En</Lang></TrayItem>
          <TrayItem $gap={13}><Mail /></TrayItem>
          <TrayItem $gap={14}><Sound /></TrayItem>
          <TrayItem $gap={15}><Clock>2:24 PM</Clock></TrayItem>
          <TrayItem $gap={13}><Power /></TrayItem>
        </Tray>
      </TopPanel>
      <Below>
        <Launcher>
          <LauncherScene />
          {launcherItems.map(({ bg, Art, left, right }, i) => (
            <Tile key={i} $bg={bg}>
              <Art />
              {left && <Pip />}
              {right && <Pip $right />}
            </Tile>
          ))}
          <Tile $last $bg="linear-gradient(#343a44,#1e2733)"><TrashArt /></Tile>
        </Launcher>
        <Browser>
          <BrowserChrome />
          <NavBar>
            <svg width="17" height="14" viewBox="0 0 17 14" fill="#fff">
              {[0, 5, 10].map((y) => [0, 6, 12].map((x) => <rect key={`${x}${y}`} x={x} y={y} width="5" height="4" rx=".6" />))}
            </svg>
            <AppTitle $ls={0.22}>Sales</AppTitle>
            <Menu $drop={2}>{menus.map(([m, ls]) => <Text key={m} $ls={ls}>{m}</Text>)}</Menu>
            <Mention>@</Mention>
            <Chats>
              <svg width="17" height="14" viewBox="0 0 17 14" fill="#fff">
                <path d="M6.500 0C10 0 12.800 2 12.800 4.700S10 9.300 6.500 9.300C5.800 9.300 5.200 9.200 4.600 9.100Q3 10.500 1.200 10.700Q2.200 9.500 2.300 8.200Q0 7 0 4.700C0 2 3 0 6.500 0Z" />
                <path d="M14 4Q17 5.500 17 8Q17 10 14.900 11.200Q15.200 12.500 16.300 13.500Q14.300 13.500 12.700 12.200Q9 12.800 6.500 10.600Q13.500 10.500 14 4Z" />
              </svg>
              <ChatCount>1</ChatCount>
            </Chats>
            <Meter><MeterFill /></Meter>
            <User>
              <svg width="13" height="15" viewBox="0 0 13 15"><circle cx="6.500" cy="6.500" r="6.500" fill="#c22d7d" /><ellipse cx="6.500" cy="6" rx="3.800" ry="4.800" fill="#e5e8e5" /><path d="M1.500 14Q2 11 5 10.500H8Q11 11 11.500 14Z" fill="#d5dad7" /></svg>
              <UserName $ls={-0.125}>iadmin (fnet_erp) (iSwasu Technologies )</UserName>
              <Caret />
            </User>
          </NavBar>
          <ControlPanel>
            <Crumbs>
              {crumbs.map(([c, ls]) => (
                <React.Fragment key={c}><Text $ls={ls}>{c}</Text><Slash>/</Slash></React.Fragment>
              ))}
              <Current>IRFQ00035</Current>
            </Crumbs>
            <Actions>
              <Button $primary><Text $ls={0.27}>SAVE</Text></Button>
              <Button><Text $ls={0.12}>DISCARD</Text></Button>
              <Pager>
                <Text $ls={-0.2}>1 / 2</Text>
                <Tool $gap={12}><Chevron /></Tool>
                <Tool $gap={19}><Chevron right /></Tool>
              </Pager>
            </Actions>
          </ControlPanel>
          <Workspace>
            <Page>
              <StatusBar>
                <Button $primary><Text $ls={0.22}>CONFIRM ORDER</Text></Button>
                <Button><Text $ls={0.28}>CANCEL</Text></Button>
                <Steps>
                  <Step><Text $ls={0.18}>DRAFT PO</Text></Step><Arrow />
                  <Step><Text $ls={0.15}>RFQ SENT</Text></Step><Arrow kind="in" />
                  <Step $active><Text $ls={0.16}>BID RECEIVED</Text></Step><Arrow kind="out" />
                  <Step><Text $ls={0.23}>PURCHASE ORDER</Text></Step><Arrow />
                  <Step><Text $ls={0.12}>DONE</Text></Step>
                </Steps>
              </StatusBar>
              <Sheet>
                <Kind>Purchase Order</Kind>
                <Heading><Text $ls={0.33}>IRFQ00035</Text></Heading>
                <Groups>
                  <Group>
                    <FieldRow label="Vendor" value="ASP Computers Pvt ltd" lls={-0.1} select link />
                    <FieldRow label="Vendor Reference" lls={0.07} value="" />
                    <FieldRow label="Currency" lls={0.05} value="INR" ls={0.4} select link />
                  </Group>
                  <Group>
                    <FieldRow label="Order Date" lls={0.17} value="05/11/2016 14:22:05" ls={-0.29} select />
                    <FieldRow label="Source Document" value="ITE00018" ls={0.05} />
                  </Group>
                </Groups>
                <Tabs>
                  <NoteTab><Text $ls={0.27}>PRODUCTS</Text></NoteTab>
                  <NoteTab $active>COSTING</NoteTab>
                  <NoteTab><Text $ls={0.18}>COSTING HISTORY</Text></NoteTab>
                  <NoteTab><Text $ls={0.22}>DELIVERIES &amp; INVOICES</Text></NoteTab>
                </Tabs>
                <StatusBar $inner>
                  <Button $primary><Text $ls={0.14}>GET ORDER</Text></Button>
                  <Steps>
                    <Step $active $first><Text $ls={0.14}>LOAD ORDER</Text></Step><Arrow kind="out" />
                    <Step><Text $ls={0.15}>IN PROGRESS</Text></Step><Arrow />
                    <Step><Text $ls={0.12}>DONE</Text></Step>
                  </Steps>
                </StatusBar>
                <HeadRow>{columns.map((c) => <HeadCell key={c}>{c}</HeadCell>)}</HeadRow>
                <BlankRow $h={28} $shade />
                <BlankRow $h={29} />
                <BlankRow $h={29} $shade />
                <BlankRow $h={28} />
                <TotalRow>{totals.map((t, i) => <Text key={i} $ls={-0.3}>{t}</Text>)}</TotalRow>
              </Sheet>
            </Page>
            <ScrollTrack><ScrollThumb /></ScrollTrack>
          </Workspace>
          <DevBar>
            <svg width="16" height="15" viewBox="0 0 16 15" fill="none" stroke="#fff">
              <path d="M4.800 3A3.200 3 0 0 1 11.200 3Z" fill="#fff" stroke="none" />
              <path d="M3.700 4H12.300V10Q12 14 8.700 14.500V6H7.300V14.500Q4 14 3.700 10Z" fill="#fff" stroke="none" />
              <path d="M4 5L1.700 2.500M12 5L14.300 2.500M4 8.500H0M12 8.500H16M4.500 11.500L2 14.200M11.500 11.500L14 14.200" strokeWidth="1.300" />
            </svg>
            <DevTitle $ls={0.1}>Developer Tools</DevTitle>
            <Menu><span>General</span><span>Action</span><span>View</span></Menu>
            <Cross size={10} color="#fff" />
          </DevBar>
        </Browser>
      </Below>
    </Desktop>
  );
}
